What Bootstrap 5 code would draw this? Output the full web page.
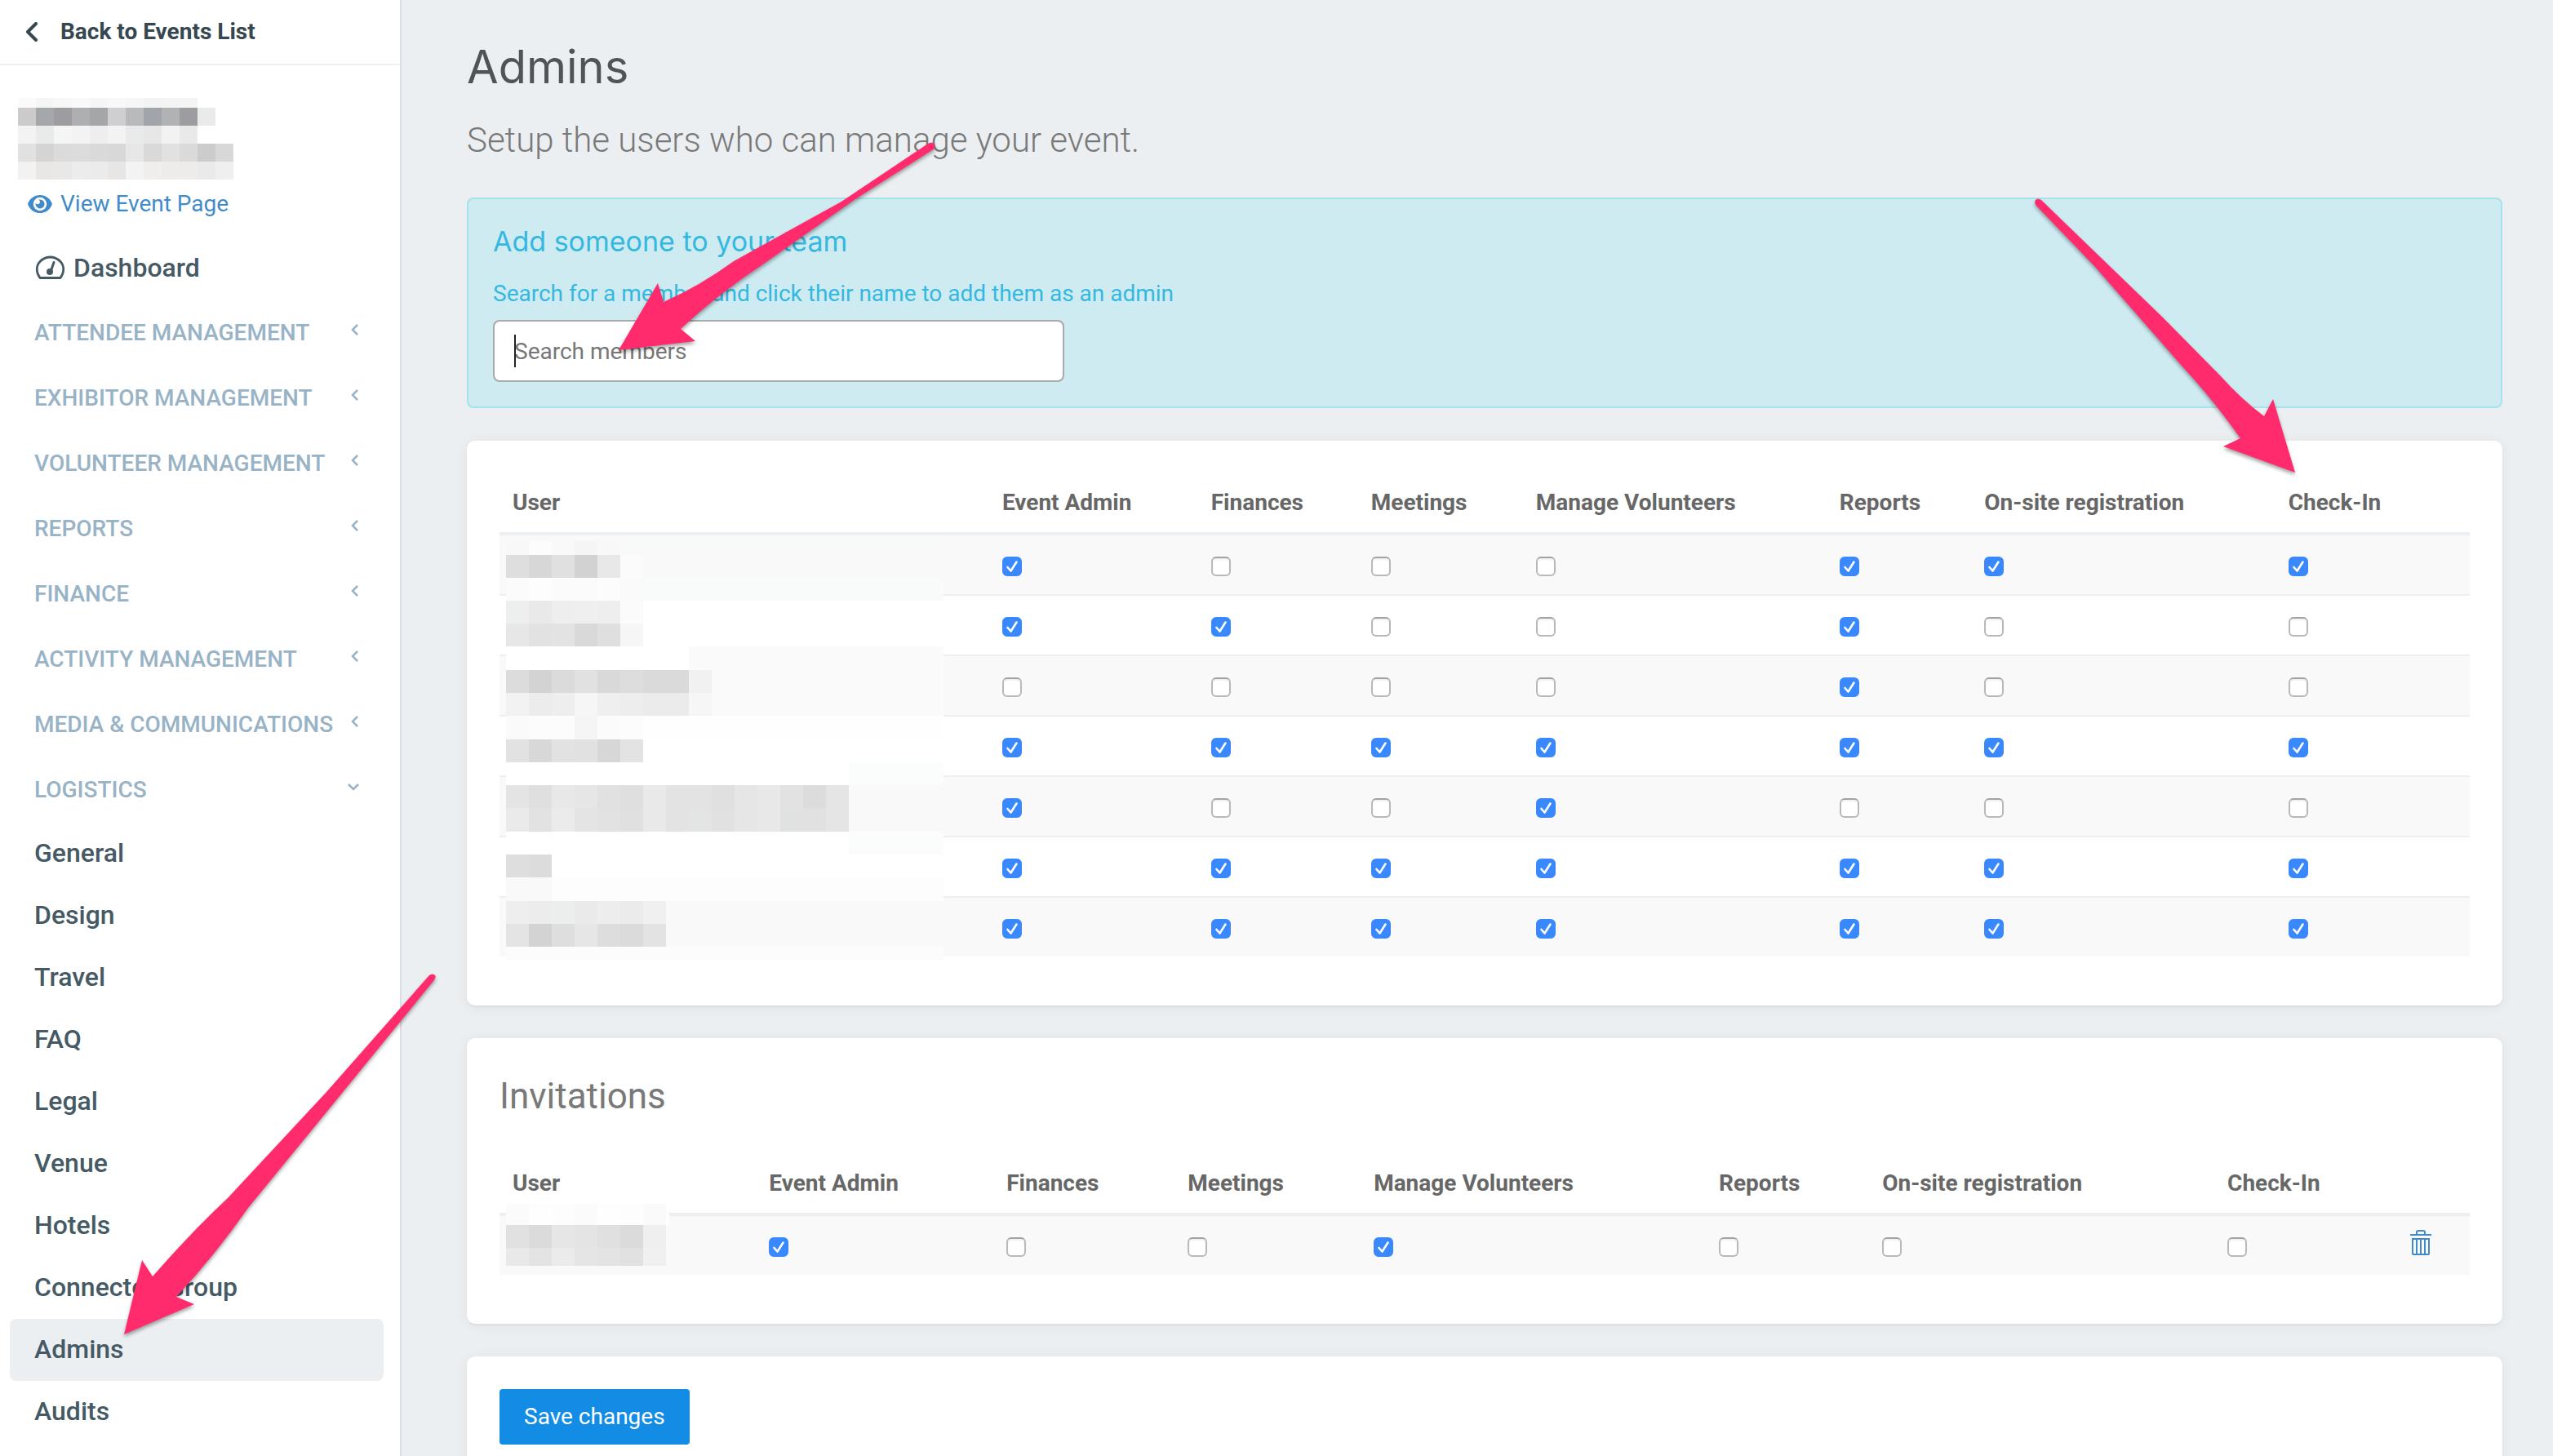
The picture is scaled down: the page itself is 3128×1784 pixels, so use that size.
<!DOCTYPE html>
<html lang="en">
<head>
<meta charset="utf-8">
<meta name="viewport" content="width=device-width, initial-scale=1">
<title>Admins</title>
<link href="https://cdn.jsdelivr.net/npm/bootstrap@5.3.0/dist/css/bootstrap.min.css" rel="stylesheet">
<style>
  body { font-family: Roboto, "Liberation Sans", sans-serif; font-size: 28px; line-height: 40px; color: #676767; background: #ebeff2; }
  a { text-decoration: none; }
  .side-panel { width: 492px; border-right: 2px solid #dadfe2; }
  .back-link { height: 80px; padding-left: 32px; gap: 28px; border-bottom: 2px solid #ebeff2; color: #37474f; font-weight: 700; }
  .event-box { padding: 40px 22px 0; }
  .view-link { margin: 10px 0 18px; padding-left: 12px; gap: 10px; color: #428bca; }
  .side-nav { padding: 0 20px 0 12px; }
  .side-nav a { padding: 0 30px; }
  .nav-group { height: 80px; font-weight: 500; color: #98b3c6; }
  .nav-group svg { margin-bottom: 8px; }
  .side-nav .nav-page { height: 76px; padding-bottom: 2px; font-size: 32px; font-weight: 500; color: #455a64; border-radius: 8px; }
  .side-nav .nav-page.dash { height: 80px; padding-bottom: 0; gap: 10px; }
  .nav-page.active { background: #ebeff2; }
  .page-main { padding: 42px 62px 0 80px; }
  h1 { font: 400 56px/80px Inter, sans-serif; color: #505458; margin: 0; }
  .intro { font-size: 42px; font-weight: 300; line-height: 60px; color: #797979; margin: 20px 0 40px; }
  .team-box { background: #ceebf1; border: 2px solid #a5e2ee; border-radius: 8px; padding: 30px; color: #35b8e0; margin-bottom: 40px; }
  .team-box h2 { font: 400 34px/44px Inter, sans-serif; margin: 0 0 22px; }
  .team-box label { margin-bottom: 12px; }
  .search-wrap { width: 700px; }
  .search-wrap input { height: 76px; border: 2px solid #aaa; border-radius: 8px; padding: 0 24px; font-size: 28px; }
  .search-wrap input::placeholder { color: #777; }
  .text-caret { left: 26px; top: 18px; width: 2px; height: 40px; background: #222; }
  .panel { background: #fff; border-radius: 10px; padding: 40px; margin-bottom: 40px; box-shadow: 0 2px 16px rgba(0,0,0,.06), 0 2px 2px rgba(0,0,0,.04); }
  .panel.tabled { padding-bottom: 60px; }
  .panel h2 { font-size: 44px; font-weight: 400; line-height: 62px; color: #797979; margin: 0 0 40px; }
  .perm-table { --bs-table-striped-bg: #f9f9f9; --bs-table-bg: transparent; table-layout: fixed; border-collapse: separate; border-spacing: 0; margin: 0; border-color: #ebeff2; }
  .perm-table > :not(caption) > * > * { padding: 16px; border: 0 solid #ebeff2; height: 72px; }
  .perm-table > thead > tr > th { border-bottom-width: 4px; height: 76px; font-weight: 700; color: #676767; white-space: nowrap; }
  .perm-table > tbody > tr + tr > td { border-top-width: 2px; height: 74px; }
  .perm-table .form-check-input { display: block; width: 24px; height: 24px; margin: 10px 0 6px; border: 2px solid #b9b9b9; border-top-color: #a2a2a2; border-radius: 6px; background-color: #fff; box-shadow: inset 0 2px 2px rgba(0,0,0,.06); }
  .perm-table .form-check-input:checked { border-color: #3a88fd; background-color: #3a88fd; background-size: 24px 24px; background-position: center; box-shadow: none; background-image: url("data:image/svg+xml,%3Csvg xmlns='http://www.w3.org/2000/svg' viewBox='0 0 24 24'%3E%3Cpath d='M6.5 13l4 4.5L17.500 6.500' fill='none' stroke='white' stroke-width='2.600' stroke-linecap='round' stroke-linejoin='round'/%3E%3C/svg%3E"); }
  .trash-btn { display: block; border: 0; padding: 0; background: none; color: #428bca; }
  .trash-btn svg { display: block; }
  .user-mask { left: 8px; top: 83px; }
  .invite-mask { left: 8px; top: 61px; }
  .save-btn { height: 68px; padding: 0 30px; font-size: 28px; line-height: 40px; border: 0; border-radius: 4px; background: #138ce6; color: #fff; }
  .pointers { pointer-events: none; z-index: 5; filter: drop-shadow(0 3px 2px rgba(0,0,0,.35)); }
</style>
<script src="https://cdn.jsdelivr.net/npm/bootstrap@5.3.0/dist/js/bootstrap.bundle.min.js"></script>
</head>
<body>
<div class="d-flex vh-100 overflow-hidden position-relative">
  <aside class="side-panel bg-white flex-shrink-0">
    <a href="#" class="back-link d-flex align-items-center">
      <svg width="14" height="24" viewBox="0 0 14 24" fill="none" stroke="currentColor" stroke-width="4" stroke-linecap="round" stroke-linejoin="round" aria-hidden="true"><path d="M12 2L2 12l10 10"/></svg>
      Back to Events List
    </a>
    <div class="event-box">
      <svg id="eventMask" class="d-block" width="286" height="100" aria-hidden="true"></svg>
      <a href="#" class="view-link d-flex align-items-center">
        <svg width="30" height="22" viewBox="0 0 30 22" aria-hidden="true"><path fill="currentColor" fill-rule="evenodd" d="M15 0C8 0 2.500 4 0 11c2.500 7 8 11 15 11s12.500-4 15-11C27.500 4 22 0 15 0zm0 2.800a8.200 8.200 0 1 1 0 16.400 8.200 8.200 0 0 1 0-16.400z"/><path fill="currentColor" d="M15 5.500a5.500 5.500 0 1 1-5.300 4.200 2.800 2.800 0 1 0 3.600-3.900c.5-.2 1.100-.3 1.700-.3z"/></svg>
        View Event Page
      </a>
    </div>
    <nav class="side-nav" id="sideNav">
      <a href="#" class="nav-page dash d-flex align-items-center">
        <svg width="38" height="30" viewBox="-1 0 38 30" fill="none" stroke="currentColor" stroke-width="3" stroke-linecap="round" stroke-linejoin="round" aria-hidden="true"><path d="M6 27.500C1 20 1 12 7 6.500c7-6 16-6 23 0 6 5.500 6 13.500 1 21z"/><path d="M19 20L23 8.500"/><circle cx="18" cy="20" r="2.500" fill="currentColor"/></svg>
        Dashboard
      </a>
    </nav>
  </aside>

  <main class="page-main flex-grow-1">
    <h1 id="pageTitle">Admins</h1>
    <p class="intro">Setup the users who can manage your event.</p>

    <section class="team-box">
      <h2>Add someone to your team</h2>
      <label for="memberSearch" class="d-block">Search for a member and click their name to add them as an admin</label>
      <div class="search-wrap position-relative">
        <input type="text" id="memberSearch" class="form-control" placeholder="Search members">
        <span class="text-caret position-absolute"></span>
      </div>
    </section>

    <section class="panel tabled">
      <div class="position-relative">
        <table class="table table-striped perm-table" id="adminTable">
          <colgroup><col style="width:24.850%"><col style="width:10.600%"><col style="width:8.120%"><col style="width:8.370%"><col style="width:15.410%"><col style="width:7.350%"><col style="width:15.430%"><col></colgroup>
          <thead><tr><th>User</th><th>Event Admin</th><th>Finances</th><th>Meetings</th><th>Manage Volunteers</th><th>Reports</th><th>On-site registration</th><th>Check-In</th></tr></thead>
          <tbody></tbody>
        </table>
        <svg id="userMask" class="user-mask position-absolute" width="536" height="513" aria-hidden="true"></svg>
      </div>
    </section>

    <section class="panel tabled">
      <h2>Invitations</h2>
      <div class="position-relative">
        <table class="table table-striped perm-table" id="inviteTable">
          <colgroup><col style="width:13.020%"><col style="width:12.050%"><col style="width:9.200%"><col style="width:9.440%"><col style="width:17.520%"><col style="width:8.290%"><col style="width:17.520%"><col style="width:9.280%"><col></colgroup>
          <thead><tr><th>User</th><th>Event Admin</th><th>Finances</th><th>Meetings</th><th>Manage Volunteers</th><th>Reports</th><th>On-site registration</th><th>Check-In</th><th></th></tr></thead>
          <tbody></tbody>
        </table>
        <svg id="inviteMask" class="invite-mask position-absolute" width="200" height="76" aria-hidden="true"></svg>
      </div>
    </section>

    <section class="panel">
      <button type="button" class="btn save-btn">Save changes</button>
    </section>
  </main>

  <svg class="pointers position-absolute top-0 start-0 w-100 h-100" fill="#ff2b6d" aria-hidden="true">
    <path d="M758 429L806 347L813 370Q858 350 899 320L1031 247L1137 176Q1143 173 1145 177Q1147 181 1142 184L1048 244L936 323Q880 360 834 403L852 418Z"/>
    <path d="M152 1635L174 1544L187 1564Q234 1510 279 1468L400 1338L526 1195Q530 1192 533 1195Q535 1198 531 1202L412 1348L304 1480Q262 1540 216 1589L238 1598Z"/>
    <path d="M2812 579L2785 489L2774 510Q2745 488 2721 461L2650 389L2501 245Q2496 242 2494 245Q2492 248 2495 252L2567 327L2673 448Q2712 490 2745 537L2724 547Z"/>
  </svg>
</div>

<script>
  const perms = ['Event Admin', 'Finances', 'Meetings', 'Manage Volunteers', 'Reports', 'On-site registration', 'Check-In'];
  const boxes = (bits, who) => [...bits].map((b, i) =>
    `<td><input class="form-check-input" type="checkbox" aria-label="${perms[i]}, ${who}" ${b === '1' ? 'checked' : ''}></td>`).join('');

  document.querySelector('#adminTable tbody').innerHTML =
    ['1000111', '1100100', '0000100', '1111111', '1001000', '1111111', '1111111']
      .map((bits, i) => `<tr><td></td>${boxes(bits, 'user ' + (i + 1))}</tr>`).join('');

  document.querySelector('#inviteTable tbody').innerHTML =
    `<tr><td></td>${boxes('1001000', 'invitation')}<td><button type="button" class="trash-btn" aria-label="Delete invitation">
      <svg width="26" height="32" viewBox="0 0 26 32" fill="none" stroke="currentColor" stroke-width="2" aria-hidden="true"><path d="M0 7h26M8 7V4q0-2 2-2h6q2 0 2 2v3M3 12h20v18q0 1-1 1H4q-1 0-1-1zM8 12v18M13 12v18M18 12v18"/></svg></button></td></tr>`;

  const groups = ['ATTENDEE MANAGEMENT', 'EXHIBITOR MANAGEMENT', 'VOLUNTEER MANAGEMENT', 'REPORTS', 'FINANCE', 'ACTIVITY MANAGEMENT', 'MEDIA &amp; COMMUNICATIONS', 'LOGISTICS'];
  const pages = ['General', 'Design', 'Travel', 'FAQ', 'Legal', 'Venue', 'Hotels', 'Connected Group', 'Admins', 'Audits'];
  const chevron = open => `<svg width="14" height="16" viewBox="0 0 14 16" fill="none" stroke="currentColor" stroke-width="2.500" aria-hidden="true"><path d="${open ? 'M1 5l6 6 6-6' : 'M12 2L6 8l6 6'}"/></svg>`;
  document.getElementById('sideNav').insertAdjacentHTML('beforeend',
    groups.map(g => `<a href="#" class="nav-group d-flex align-items-center justify-content-between">${g}${chevron(g === 'LOGISTICS')}</a>`).join('') +
    pages.map(p => `<a href="#" class="nav-page d-flex align-items-center${p === 'Admins' ? ' active' : ''}">${p}</a>`).join(''));

  /* Redacted names: each band is [height, backdrop, grey level of each tile]; a tail backdrop may start at a tile. */
  function tiles(id, size, bands) {
    const svg = document.getElementById(id), w = svg.getAttribute('width');
    let y = 0, out = '';
    for (const [h, back, cells, tail] of bands) {
      if (back) out += `<rect x="0" y="${y}" width="${w}" height="${h}" fill="${back}"/>`;
      if (tail) out += `<rect x="${tail[0] * size}" y="${y}" width="${w - tail[0] * size}" height="${h}" fill="${tail[1]}"/>`;
      (cells ? cells.split(' ') : []).forEach((c, i) => {
        out += `<rect x="${i * size}" y="${y}" width="${size}" height="${h}" fill="#${c.length === 2 ? c + c + c : c}"/>`;
      });
      y += h;
    }
    svg.setAttribute('shape-rendering', 'crispEdges');
    svg.innerHTML = out;
  }
  tiles('eventMask', 22, [
    [12, '', 'fa f4f5f5 f7 f9 f5f6f6 f8 f6 f2f4f4 f4 f4'],
    [22, '', 'cb a5a8ab 9d9da1 aeafb1 a5a6a8 cfcfd1 b9babc a1a4a8 b1b2b4 9c9ca1 e9ebea'],
    [22, '', 'f3 e9ebea f4f6f5 f3 ee f3 e9ebeb e7 f2 e9'],
    [22, '', 'e1 d4 db dc d9 d8 e7 d9 e1 da cc d8'],
    [22, '', 'f3f2f0 e8e7e6 eae8e7 edecec eb e7e6e5 f3 efeeed edecea edecea ea ef']
  ]);
  tiles('userMask', 28, [
    [17, '#f8f9f9', 'f8 fc f9 f5 f8'],
    [28, '#f9f9f9', 'de d7 e0 d2 e8 fb'],
    [28, '#f9fbfa', 'fb fd fb fb fc fa'],
    [28, '#fff', 'edefee e9 ee ef ee fb'],
    [28, '#fff', 'e7 e2 e3 d9 df f6'],
    [29, '#fff', '', [8, '#fafafa']],
    [28, '#fafafa', 'dc d3 db e1 d9 dd da da f1'],
    [28, '#fafafa', 'f2 ec ee f6 ef ed eb eb f6'],
    [29, '#fefefe', 'fa fc fc f5 fb fc'],
    [28, '#fff', 'e2 d8 e2 e1 d7 e3'],
    [28, '#fff', '', [15, '#fbfdfc']],
    [28, '#f9f9f9', 'e4 df e8 e6 e1 df e9 e3 e3 e0 e6 e8 e2 dc e5'],
    [29, '#f9f9f9', 'ea e2 eb e4 e2 e0 e9 e3 e2e5e4 e1 e6 e8 e0e2e2 e1 e5'],
    [28, '#fff', '', [15, '#fbfdfc']],
    [28, '#fff', 'de dc'],
    [29, '#fdfdfd', 'f9 f9'],
    [28, '#f9f9f9', 'ee ec ebeeed ea ed eb f0'],
    [28, '#f9f9f9', 'e4 d3 de e6 dd db e3'],
    [16, '#fcfcfc', '']
  ]);
  tiles('inviteMask', 28, [
    [26, '#fdfefe', 'fb fe fd fb fe fd fa'],
    [28, '#f9f9f9', 'e1 db e6 e4 e0 db ef'],
    [22, '#f9f9f9', 'e9 e3 eb e5 e3 e1 f0']
  ]);
</script>
</body>
</html>
